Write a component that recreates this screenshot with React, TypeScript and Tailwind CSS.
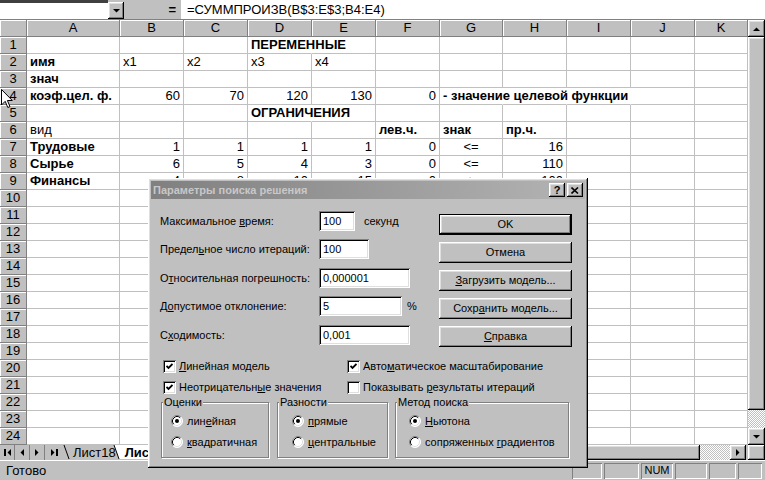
import React from "react";

type Cell = { t: string; b?: boolean; r?: boolean; c?: boolean; o?: boolean };
type Row = Partial<Record<string, Cell>>;

const raised =
  "bg-[#c0c0c0] shadow-[inset_-1px_-1px_#000,inset_1px_1px_#fff,inset_-2px_-2px_#808080,inset_2px_2px_#dfdfdf]";
const sunken =
  "bg-white shadow-[inset_1px_1px_#808080,inset_-1px_-1px_#fff,inset_2px_2px_#000,inset_-2px_-2px_#dfdfdf]";
const hdr =
  "bg-[#c0c0c0] border-r border-b border-[#808080] shadow-[inset_1px_1px_#fff]";
const dots =
  "bg-[repeating-conic-gradient(#c0c0c0_0%_25%,#fff_0%_50%)] bg-size-[2px_2px]";

const COLS = [
  { k: "A", w: "w-[93px]" },
  { k: "B", w: "w-[64px]" },
  { k: "C", w: "w-[64px]" },
  { k: "D", w: "w-[64px]" },
  { k: "E", w: "w-[64px]" },
  { k: "F", w: "w-[64px]" },
  { k: "G", w: "w-[63px]" },
  { k: "H", w: "w-[64px]" },
  { k: "I", w: "w-[64px]" },
  { k: "J", w: "w-[64px]" },
  { k: "K", w: "w-[53px]" },
];

const n = (t: string): Cell => ({ t, r: true });
const bo = (t: string, o?: boolean): Cell => ({ t, b: true, o });

const DATA: Row[] = [
  { D: bo("ПЕРЕМЕННЫЕ", true) },
  { A: bo("имя"), B: { t: "x1" }, C: { t: "x2" }, D: { t: "x3" }, E: { t: "x4" } },
  { A: bo("знач") },
  {
    A: bo("коэф.цел. ф."),
    B: n("60"),
    C: n("70"),
    D: n("120"),
    E: n("130"),
    F: n("0"),
    G: bo("- значение целевой функции", true),
    H: { t: "", o: true },
    I: { t: "", o: true },
  },
  { D: bo("ОГРАНИЧЕНИЯ", true) },
  { A: { t: "вид" }, F: bo("лев.ч."), G: bo("знак"), H: bo("пр.ч.") },
  { A: bo("Трудовые"), B: n("1"), C: n("1"), D: n("1"), E: n("1"), F: n("0"), G: { t: "<=", c: true }, H: n("16") },
  { A: bo("Сырье"), B: n("6"), C: n("5"), D: n("4"), E: n("3"), F: n("0"), G: { t: "<=", c: true }, H: n("110") },
  { A: bo("Финансы"), B: n("4"), C: n("8"), D: n("10"), E: n("15"), F: n("0"), G: { t: "<=", c: true }, H: n("100") },
];

const ROWS: Row[] = Array.from({ length: 24 }, (_, i) => DATA[i] ?? {});

function Tri({ dir }: { dir: "up" | "down" | "left" | "right" }) {
  if (dir === "up")
    return (
      <svg width="7" height="4" viewBox="0 0 7 4">
        <polygon points="0,4 7,4 3.5,0.5" fill="#000" />
      </svg>
    );
  if (dir === "down")
    return (
      <svg width="7" height="4" viewBox="0 0 7 4">
        <polygon points="0,0 7,0 3.5,3.5" fill="#000" />
      </svg>
    );
  if (dir === "left")
    return (
      <svg width="4" height="7" viewBox="0 0 4 7">
        <polygon points="4,0 4,7 0.5,3.5" fill="#000" />
      </svg>
    );
  return (
    <svg width="4" height="7" viewBox="0 0 4 7">
      <polygon points="0,0 0,7 3.5,3.5" fill="#000" />
    </svg>
  );
}

function Check({ on }: { on: boolean }) {
  return (
    <span className={`flex h-[13px] w-[13px] shrink-0 items-center justify-center ${sunken}`}>
      {on && (
        <svg width="7" height="7" viewBox="0 0 7 7">
          <path d="M0.5 3 L2.5 5 L6.5 1" stroke="#000" strokeWidth="1.8" fill="none" />
        </svg>
      )}
    </span>
  );
}

function Radio({ on }: { on: boolean }) {
  return (
    <svg width="12" height="12" viewBox="0 0 12 12" className="shrink-0">
      <circle cx="6" cy="6" r="5.5" fill="#fff" />
      <path d="M9.89 2.11 A5.5 5.5 0 0 0 2.11 9.89" stroke="#808080" fill="none" />
      <path d="M9.18 2.82 A4.5 4.5 0 0 0 2.82 9.18" stroke="#000" fill="none" />
      <path d="M9.89 2.11 A5.5 5.5 0 0 1 2.11 9.89" stroke="#fff" fill="none" />
      <path d="M9.18 2.82 A4.5 4.5 0 0 1 2.82 9.18" stroke="#dfdfdf" fill="none" />
      {on && <circle cx="6" cy="6" r="2" fill="#000" />}
    </svg>
  );
}

function Field({ w, v }: { w: string; v: string }) {
  return (
    <div className={`${w} flex h-[20px] items-center pl-[4px] ${sunken}`}>{v}</div>
  );
}

function Btn({ children, def }: { children: React.ReactNode; def?: boolean }) {
  return (
    <div
      className={`flex h-[21px] w-[133px] items-center justify-center ${raised} ${def ? "border border-black" : ""}`}
    >
      {children}
    </div>
  );
}

function Group({
  title,
  w,
  pl,
  items,
}: {
  title: React.ReactNode;
  w: string;
  pl: string;
  items: { label: React.ReactNode; on: boolean }[];
}) {
  return (
    <div
      className={`relative h-[56px] ${w} border border-[#808080] shadow-[inset_1px_1px_#fff,1px_1px_#fff]`}
    >
      <span className="absolute -top-[7px] left-[1px] bg-[#c0c0c0] px-[1px] leading-[13px]">{title}</span>
      <div className={`flex flex-col gap-[9px] pt-[12px] ${pl}`}>
        {items.map((it, i) => (
          <div key={i} className="flex h-[12px] items-center gap-[4px]">
            <Radio on={it.on} />
            <span>{it.label}</span>
          </div>
        ))}
      </div>
    </div>
  );
}

function Dialog() {
  return (
    <div
      className={`absolute left-[148px] top-[178px] flex h-[290px] w-[440px] flex-col p-[3px] text-[11px] leading-[13px] text-black ${raised}`}
    >
      <div className="flex h-[18px] shrink-0 items-center justify-between bg-linear-to-r from-[#808080] to-[#b4b4b4] pl-[2px] pr-[2px]">
        <span className="font-bold text-[#c8c8c8]">Параметры поиска решения</span>
        <div className="flex gap-[2px]">
          <div className={`flex h-[14px] w-[16px] items-center justify-center font-bold ${raised}`}>?</div>
          <div className={`flex h-[14px] w-[16px] items-center justify-center ${raised}`}>
            <svg width="8" height="7" viewBox="0 0 8 7">
              <path d="M0.5 0.5 L7 6.5 M7 0.5 L0.5 6.5" stroke="#000" strokeWidth="1.6" />
            </svg>
          </div>
        </div>
      </div>

      <div className="flex flex-col pl-[9px]">
        <div className="flex">
          <div className="flex w-[279px] flex-col pt-[12px]">
            <div className="flex h-[20px] items-center">
              <span className="w-[159px]">
                Максимальное <u>в</u>ремя:
              </span>
              <Field w="w-[36px]" v="100" />
              <span className="ml-[9px]">секунд</span>
            </div>
            <div className="mt-[8px] flex h-[20px] items-center">
              <span className="w-[159px]">
                Предел<u>ь</u>ное число итераций:
              </span>
              <Field w="w-[50px]" v="100" />
            </div>
            <div className="mt-[9px] flex h-[20px] items-center">
              <span className="w-[159px]">
                О<u>т</u>носительная погрешность:
              </span>
              <Field w="w-[91px]" v="0,000001" />
            </div>
            <div className="mt-[8px] flex h-[20px] items-center">
              <span className="w-[159px]">
                Д<u>о</u>пустимое отклонение:
              </span>
              <Field w="w-[83px]" v="5" />
              <span className="ml-[5px]">%</span>
            </div>
            <div className="mt-[9px] flex h-[20px] items-center">
              <span className="w-[159px]">
                С<u>х</u>одимость:
              </span>
              <Field w="w-[91px]" v="0,001" />
            </div>
          </div>
          <div className="flex flex-col gap-[7px] pt-[15px]">
            <Btn def>OK</Btn>
            <Btn>Отмена</Btn>
            <Btn>
              <span>
                <u>З</u>агрузить модель...
              </span>
            </Btn>
            <Btn>
              <span>
                Сохр<u>а</u>нить модель...
              </span>
            </Btn>
            <Btn>
              <span>
                <u>С</u>правка
              </span>
            </Btn>
          </div>
        </div>

        <div className="mt-[13px] flex flex-col gap-[8px]">
          <div className="flex h-[13px]">
            <div className="flex w-[187px] items-center gap-[3px] pl-[3px]">
              <Check on />
              <span>
                <u>Л</u>инейная модель
              </span>
            </div>
            <div className="flex items-center gap-[3px]">
              <Check on />
              <span>
                Авто<u>м</u>атическое масштабирование
              </span>
            </div>
          </div>
          <div className="flex h-[13px]">
            <div className="flex w-[187px] items-center gap-[3px] pl-[3px]">
              <Check on />
              <span>
                Неотрицательн<u>ы</u>е значения
              </span>
            </div>
            <div className="flex items-center gap-[3px]">
              <Check on={false} />
              <span>
                Показывать <u>р</u>езультаты итераций
              </span>
            </div>
          </div>
        </div>

        <div className="mt-[8px] flex pl-[1px]">
          <Group
            title="Оценки"
            w="w-[108px]"
            pl="pl-[9px]"
            items={[
              { label: <>лин<u>е</u>йная</>, on: true },
              { label: <><u>к</u>вадратичная</>, on: false },
            ]}
          />
          <div className="ml-[8px]">
            <Group
              title="Разности"
              w="w-[111px]"
              pl="pl-[14px]"
              items={[
                { label: <><u>п</u>рямые</>, on: true },
                { label: <><u>ц</u>ентральные</>, on: false },
              ]}
            />
          </div>
          <div className="ml-[7px]">
            <Group
              title="Метод поиска"
              w="w-[174px]"
              pl="pl-[13px]"
              items={[
                { label: <><u>Н</u>ьютона</>, on: true },
                { label: <>сопряженных <u>г</u>радиентов</>, on: false },
              ]}
            />
          </div>
        </div>
      </div>
    </div>
  );
}

export default function App() {
  return (
    <div className="relative flex h-[480px] w-[765px] flex-col overflow-hidden bg-[#c0c0c0] font-['Liberation_Sans',Arial,sans-serif] text-black">
      {/* formula bar */}
      <div className="flex h-[20px] shrink-0 border-b border-[#808080]">
        <div className="h-full w-[108px] border-t-[3px] border-[#404040] bg-white" />
        <div className={`mt-[2px] flex h-[17px] w-[16px] items-center justify-center ${raised}`}>
          <Tri dir="down" />
        </div>
        <div className="flex w-[57px] items-center justify-end pr-[5px] text-[13px] font-bold">=</div>
        <div className="flex flex-1 items-center bg-white pl-[6px] text-[13px]">=СУММПРОИЗВ(B$3:E$3;B4:E4)</div>
      </div>

      {/* sheet + vertical scroll */}
      <div className="flex h-[425px] shrink-0">
        <div className="flex w-[748px] flex-col overflow-hidden bg-white">
          <div className="flex">
            <div className={`h-[17px] w-[27px] shrink-0 ${hdr}`} />
            {COLS.map((c) => (
              <div
                key={c.k}
                className={`flex h-[17px] shrink-0 items-center justify-center text-[13px] ${c.w} ${hdr}`}
              >
                {c.k}
              </div>
            ))}
          </div>
          {ROWS.map((row, i) => (
            <div key={i} className="flex">
              <div className={`flex h-[17px] w-[27px] shrink-0 items-center justify-center text-[13px] ${hdr}`}>
                {i + 1}
              </div>
              {COLS.map((c) => {
                const cell = row[c.k];
                return (
                  <div
                    key={c.k}
                    className={`flex h-[17px] shrink-0 items-center whitespace-nowrap border-b border-r border-b-[#c0c0c0] px-[3px] text-[13px] ${c.w} ${
                      cell?.o ? "border-r-transparent" : "border-r-[#c0c0c0]"
                    } ${cell?.r ? "justify-end" : cell?.c ? "justify-center" : ""} ${cell?.b ? "relative z-10 font-bold" : ""}`}
                  >
                    {cell?.t}
                  </div>
                );
              })}
            </div>
          ))}
        </div>
        <div className="flex w-[17px] flex-col">
          <div className={`flex h-[17px] items-center justify-center ${raised}`}>
            <Tri dir="up" />
          </div>
          <div className={`h-[373px] ${raised}`} />
          <div className={`h-[18px] ${dots}`} />
          <div className={`flex h-[17px] items-center justify-center ${raised}`}>
            <Tri dir="down" />
          </div>
        </div>
      </div>

      {/* sheet tabs + horizontal scroll */}
      <div className="flex h-[15px] shrink-0">
        <div className="flex">
          <div className="flex w-[15px] items-center justify-center border-r border-[#808080] pl-[1px]">
            <span className="mr-[1px] h-[7px] w-[2px] bg-black" />
            <Tri dir="left" />
          </div>
          <div className="flex w-[15px] items-center justify-center border-r border-[#808080]">
            <Tri dir="left" />
          </div>
          <div className="flex w-[15px] items-center justify-center border-r border-[#808080]">
            <Tri dir="right" />
          </div>
          <div className="flex w-[18px] items-center justify-center">
            <Tri dir="right" />
            <span className="ml-[1px] h-[7px] w-[2px] bg-black" />
          </div>
        </div>
        <div className="relative flex w-[180px] items-center text-[13px]">
          <svg className="absolute left-0 top-0" width="180" height="15" viewBox="0 0 180 15">
            <line x1="1" y1="0" x2="6" y2="14" stroke="#000" />
            <polygon points="51,0 120,0 120,14 56,14" fill="#fff" />
            <line x1="51" y1="0" x2="56" y2="14" stroke="#000" />
          </svg>
          <span className="relative ml-[10px]">Лист18</span>
          <span className="relative ml-[9px] font-bold">Лист19</span>
        </div>
        <div className="flex-1" />
        <div className="flex w-[268px]">
          <div className={`w-[16px] ${raised}`} />
          <div className={`flex-1 ${raised}`} />
          <div className={`w-[30px] ${dots}`} />
          <div className={`flex w-[16px] items-center justify-center ${raised}`}>
            <Tri dir="right" />
          </div>
        </div>
        <div className="w-[2px]" />
        <div className={`w-[17px] ${raised}`} />
      </div>

      {/* status bar */}
      <div className="flex h-[20px] shrink-0 items-center border-t border-white text-[13px]">
        <span className="pl-[6px]">Готово</span>
        <div className="flex-1" />
        <div className="flex h-[16px] gap-[2px] pr-[3px] text-[11px]">
          <div className="w-[30px] shadow-[inset_1px_1px_#808080,inset_-1px_-1px_#fff]" />
          <div className="w-[35px] shadow-[inset_1px_1px_#808080,inset_-1px_-1px_#fff]" />
          <div className="flex w-[32px] items-center justify-center shadow-[inset_1px_1px_#808080,inset_-1px_-1px_#fff]">
            NUM
          </div>
          <div className="w-[32px] shadow-[inset_1px_1px_#808080,inset_-1px_-1px_#fff]" />
          <div className="w-[27px] shadow-[inset_1px_1px_#808080,inset_-1px_-1px_#fff]" />
          <div className="w-[24px] shadow-[inset_1px_1px_#808080,inset_-1px_-1px_#fff]" />
        </div>
      </div>

      <Dialog />

      {/* mouse pointer */}
      <svg className="absolute left-[1px] top-[89px]" width="12" height="20" viewBox="0 0 12 20">
        <path d="M0.5 0.5 L0.5 16 L4.2 12.3 L6.8 18.5 L9 17.6 L6.4 11.5 L11.3 11.5 Z" fill="#fff" stroke="#000" />
      </svg>
    </div>
  );
}
